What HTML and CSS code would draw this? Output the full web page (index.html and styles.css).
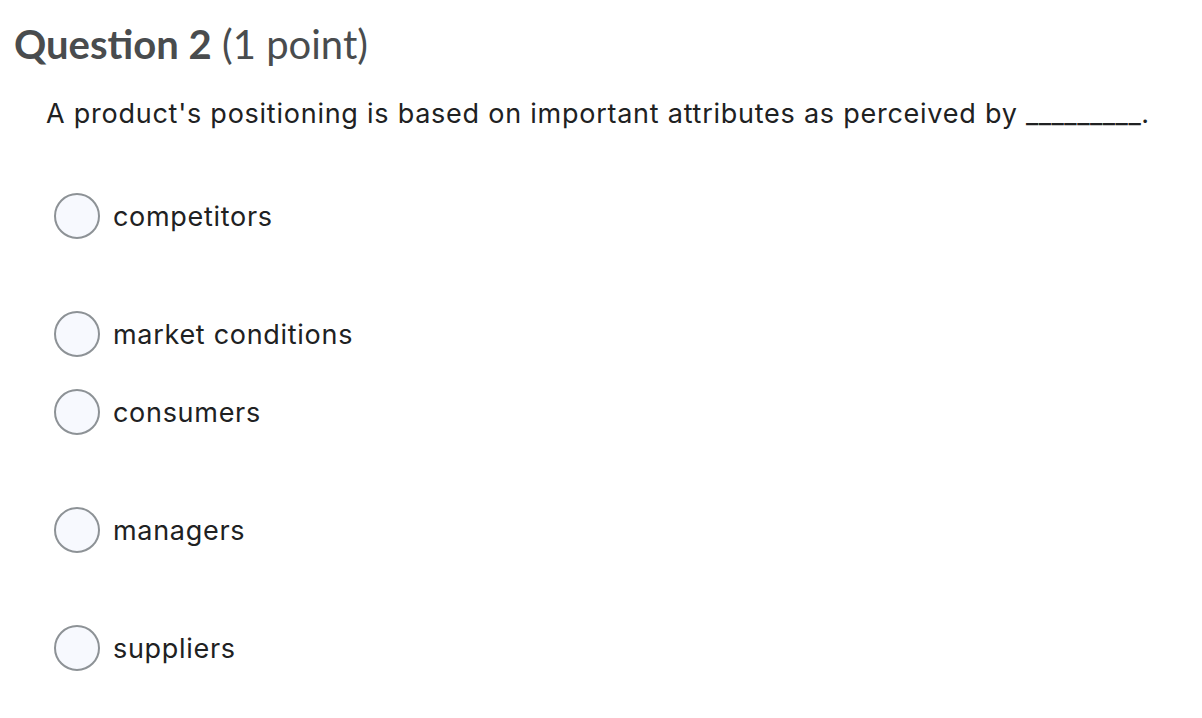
FILE: index.html
```html
<!DOCTYPE html>
<html>
<head>
<meta charset="utf-8">
<link rel="stylesheet" href="styles.css">
</head>
<body>
<div class="question">
  <h2 class="q-title"><strong>Question 2</strong> <span class="q-points">(1 point)</span></h2>
  <p class="q-text">A product's positioning is based on important attributes as perceived by <span class="blank">_________</span>.</p>
  <ul class="options">
    <li class="option"><span class="radio"></span><span class="label">competitors</span></li>
    <li class="option option-short"><span class="radio"></span><span class="label">market conditions</span></li>
    <li class="option"><span class="radio"></span><span class="label">consumers</span></li>
    <li class="option"><span class="radio"></span><span class="label">managers</span></li>
    <li class="option"><span class="radio"></span><span class="label">suppliers</span></li>
  </ul>
</div>
</body>
</html>
```

FILE: styles.css
```css
html, body {
  margin: 0;
  padding: 0;
  background: #ffffff;
}

.question {
  padding: 19px 0 0 14px;
}

.q-title {
  margin: 0;
  font-family: "Lato", "Open Sans", sans-serif;
  font-size: 40px;
  line-height: 50px;
  color: #494c4e;
  font-weight: 400;
}

.q-title strong {
  font-weight: 700;
}

.q-text {
  margin: 27px 0 0 32px;
  font-family: "Inter", "Liberation Sans", sans-serif;
  font-size: 27px;
  line-height: 36px;
  letter-spacing: 0.75px;
  color: #202122;
}

.blank {
  letter-spacing: 0.5px;
}

.options {
  list-style: none;
  margin: 61px 0 0 40px;
  padding: 0;
  display: flex;
  flex-direction: column;
}

.option {
  display: flex;
  gap: 13px;
  height: 118px;
  align-items: flex-start;
}

.option-short {
  height: 78px;
}

.radio {
  width: 42px;
  height: 42px;
  border: 2px solid #8d9296;
  border-radius: 50%;
  background: #f7f9fe;
  flex: none;
}

.label {
  font-family: "Inter", "Liberation Sans", sans-serif;
  font-size: 27px;
  line-height: 48px;
  letter-spacing: 0.7px;
  color: #202122;
}
```
